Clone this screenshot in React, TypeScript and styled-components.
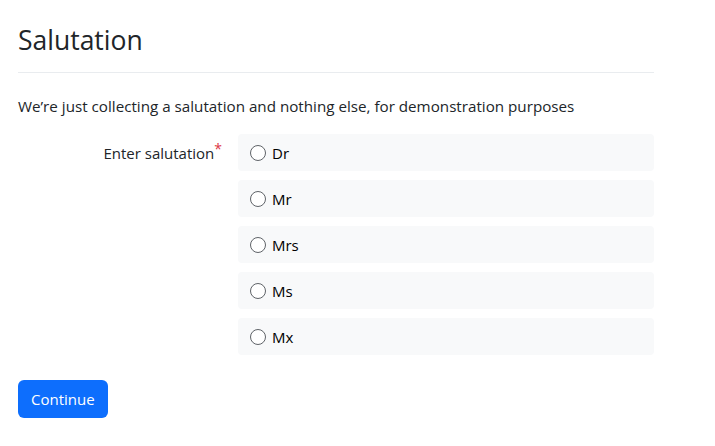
import styled, { createGlobalStyle } from 'styled-components';

const GlobalStyle = createGlobalStyle`
    body {
        margin: 0;
        background: #fff;
        color: #212529;
        font-family: "Open Sans", "Noto Sans", sans-serif;
        font-size: 15px;
    }
    * {
        box-sizing: border-box;
    }
`

const StyledPage = styled.div`
    width: 636px;
    margin-left: 18px;
    padding-top: 22px;
`

const StyledTitle = styled.h2`
    margin: 0;
    font-size: 26.5px;
    font-weight: 400;
    line-height: 36px;
    padding-bottom: 14px;
    border-bottom: 1px solid #e9ecef;
`

const StyledLead = styled.p`
    margin: 22px 0 17px;
    font-size: 15.2px;
    line-height: 22px;
`

const StyledFieldRow = styled.div`
    display: grid;
    grid-template-columns: 220px 416px;
`

const StyledLabel = styled.label`
    text-align: right;
    padding: 8px 16px 0 0;
    line-height: 22px;
`

const StyledRequired = styled.sup`
    color: #dc3545;
    font-size: 14px;
    vertical-align: top;
    line-height: 14px;
`

const StyledOptions = styled.div`
    display: flex;
    flex-direction: column;
    gap: 9px;
`

const StyledOption = styled.label`
    display: flex;
    align-items: center;
    gap: 6px;
    height: 37px;
    padding: 0 12px;
    background: #f8f9fa;
    border-radius: 4px;
    color: #000;
    cursor: pointer;
`

const StyledRadio = styled.input`
    appearance: none;
    margin: 0;
    width: 16px;
    height: 16px;
    border: 1.5px solid #5f6368;
    border-radius: 50%;
    background: #fff;
`

const StyledButton = styled.button`
    margin-top: 25px;
    height: 38px;
    padding: 0 13px;
    border: none;
    border-radius: 6px;
    background: #0d6efd;
    color: #fff;
    font-family: inherit;
    font-size: 15px;
    cursor: pointer;
`

const options = ['Dr', 'Mr', 'Mrs', 'Ms', 'Mx'];

export default function App() {
    return (
        <>
            <GlobalStyle />
            <StyledPage>
                <StyledTitle>Salutation</StyledTitle>
                <StyledLead>We’re just collecting a salutation and nothing else, for demonstration purposes</StyledLead>
                <StyledFieldRow>
                    <StyledLabel>Enter salutation<StyledRequired>*</StyledRequired></StyledLabel>
                    <StyledOptions>
                        {options.map(option => (
                            <StyledOption key={option}>
                                <StyledRadio type="radio" name="salutation" value={option} />
                                {option}
                            </StyledOption>
                        ))}
                    </StyledOptions>
                </StyledFieldRow>
                <StyledButton>Continue</StyledButton>
            </StyledPage>
        </>
    )
}
